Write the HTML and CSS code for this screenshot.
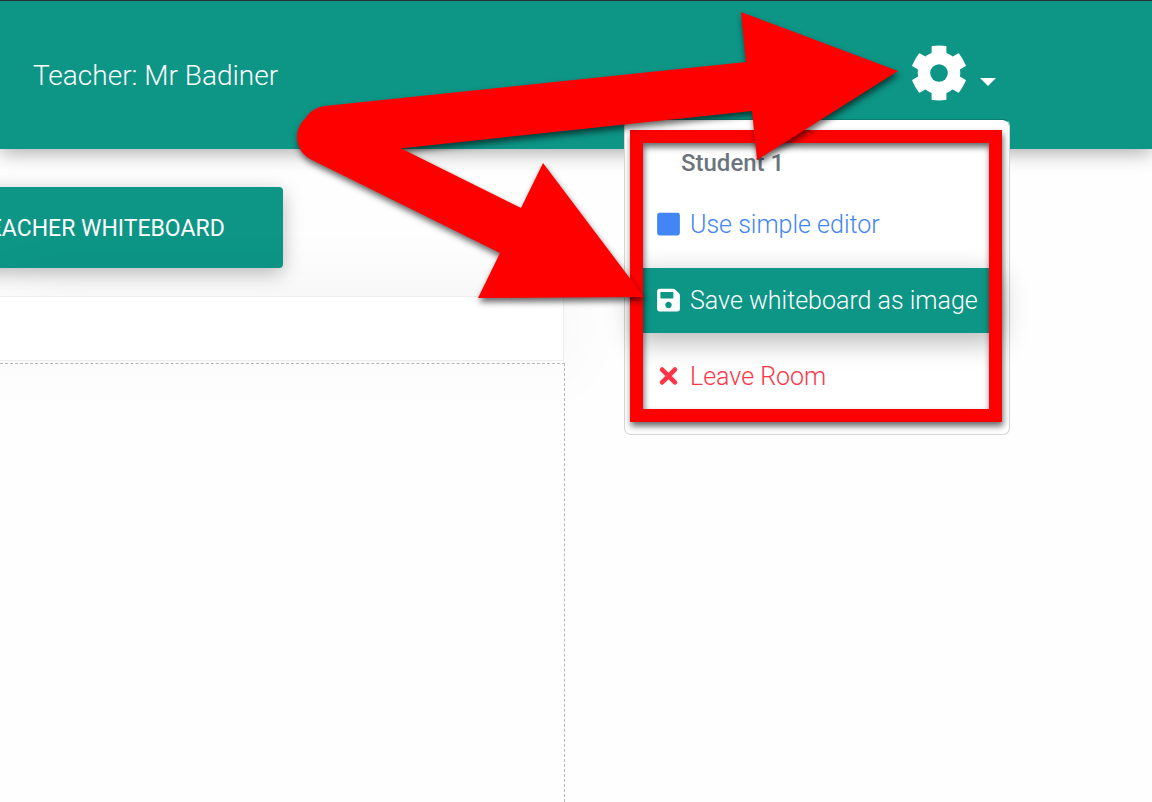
FILE: index.html
```html
<!DOCTYPE html>
<html lang="en">
<head>
    <meta charset="UTF-8">
    <meta name="viewport" content="width=device-width, initial-scale=1.0">
    <title>Whiteboard</title>
    <link rel="stylesheet" href="styles.css">
</head>
<body>
    <header class="navbar">
        <span class="teacher-name">Teacher: Mr Badiner</span>

        <div class="settings">
            <button class="settings-button" type="button" aria-label="Settings">
                <svg class="gear" viewBox="-28 -28 56 56" aria-hidden="true">
                    <defs>
                        <path id="tooth" d="M-7.4 -18V-26.2Q-7.4 -27 -6.6 -27.1Q0 -27.9 6.6 -27.1Q7.4 -27 7.4 -26.2V-18z"/>
                        <mask id="hole">
                            <rect x="-28" y="-28" width="56" height="56" fill="#fff"/>
                            <circle r="8.8" fill="#000"/>
                        </mask>
                    </defs>
                    <g fill="#fff" mask="url(#hole)">
                        <circle r="21.3"/>
                        <use href="#tooth"/>
                        <use href="#tooth" transform="rotate(60)"/>
                        <use href="#tooth" transform="rotate(120)"/>
                        <use href="#tooth" transform="rotate(180)"/>
                        <use href="#tooth" transform="rotate(240)"/>
                        <use href="#tooth" transform="rotate(300)"/>
                    </g>
                </svg>
                <span class="caret"></span>
            </button>

            <div class="menu">
                <h6 class="menu-header">Student 1</h6>
                <a href="#" class="menu-item simple">
                    <svg class="icon" viewBox="0 0 448 512" aria-hidden="true"><rect y="32" width="448" height="448" rx="48"/></svg>
                    Use simple editor
                </a>
                <a href="#" class="menu-item save">
                    <svg class="icon" viewBox="0 0 448 512" aria-hidden="true"><path d="M433.941 129.941l-83.882-83.882A48 48 0 0 0 316.118 32H48C21.49 32 0 53.49 0 80v352c0 26.51 21.49 48 48 48h352c26.51 0 48-21.49 48-48V163.882a48 48 0 0 0-14.059-33.941zM224 416c-35.346 0-64-28.654-64-64 0-35.346 28.654-64 64-64s64 28.654 64 64c0 35.346-28.654 64-64 64zm96-304.52V212c0 6.627-5.373 12-12 12H76c-6.627 0-12-5.373-12-12V108c0-6.627 5.373-12 12-12h228.52c3.183 0 6.235 1.264 8.485 3.515l3.48 3.48A11.996 11.996 0 0 1 320 111.48z"/></svg>
                    Save whiteboard as image
                </a>
                <a href="#" class="menu-item leave">
                    <svg class="icon" viewBox="0 0 448 512" aria-hidden="true"><path d="M98 130L350 382M350 130L98 382" stroke="currentColor" stroke-width="92" stroke-linecap="round"/></svg>
                    Leave Room
                </a>
                <div class="highlight-frame"></div>
            </div>

            <svg class="arrows" viewBox="290 0 720 310" aria-hidden="true">
                <path d="M324.500 106.100L746 62L741 12L898 71L757 160L752 111L329.500 155.900A25 25 0 0 1 324.500 106.100z"/>
                <path d="M333 114.600L521 208L543 163L644 297L478 298L500 253L311 159.500A25 25 0 0 1 333 114.600z"/>
            </svg>
        </div>
    </header>

    <main class="board">
        <div class="tabs">
            <button class="tab-button" type="button">TEACHER WHITEBOARD</button>
        </div>
        <div class="toolbar"></div>
        <div class="canvas"></div>
    </main>
</body>
</html>
```
FILE: styles.css
```css
* {
    box-sizing: border-box;
}
body {
    margin: 0;
    min-height: 100vh;
    display: flex;
    flex-direction: column;
    background: #fefefe;
    font-family: Roboto, sans-serif;
    overflow-x: hidden;
}

/* top bar */
.navbar {
    position: relative;
    z-index: 2;
    display: flex;
    justify-content: space-between;
    align-items: center;
    min-height: 149px;
    padding: 0 142px 0 33px;
    border-top: 1px solid #2b2f33;
    background: #0d9586;
    box-shadow: 0 4px 18px rgba(0, 0, 0, 0.32);
}
.teacher-name {
    color: #fff;
    font-size: 28px;
    font-weight: 300;
}
.settings {
    position: relative;
    align-self: stretch;
    display: flex;
    align-items: center;
}
.settings-button {
    display: flex;
    align-items: center;
    gap: 13px;
    padding: 0 14px 4px 0;
    border: none;
    background: none;
    cursor: pointer;
}
.gear {
    width: 56px;
    height: 56px;
}
.caret {
    margin-top: 17px;
    border: 8px solid transparent;
    border-top-color: #fff;
    border-bottom: none;
}

/* dropdown */
.menu {
    position: absolute;
    top: 118px;
    right: 0;
    width: 386px;
    padding: 15px 10px 25px;
    border: 1px solid #d5d5d5;
    border-top-color: #0b7e70;
    border-radius: 7px;
    background: #fff;
    background-clip: padding-box;
}
.menu-header {
    margin: 0;
    padding-left: 46px;
    color: #6c757d;
    font-size: 24px;
    font-weight: 500;
    line-height: 57px;
}
.menu-item {
    display: flex;
    align-items: center;
    gap: 10px;
    height: 65px;
    margin-bottom: 11px;
    padding-left: 22px;
    font-size: 25px;
    font-weight: 300;
    white-space: nowrap;
    text-decoration: none;
}
.menu-item.simple {
    color: #4285f4;
}
.menu-item.save {
    background: #0d9586;
    color: #fff;
    box-shadow: 0 8px 28px rgba(0, 0, 0, 0.3);
}
.menu-item.leave {
    margin-bottom: 0;
    color: #ff3547;
}
.icon {
    width: 23px;
    height: 26px;
    margin-bottom: 2px;
    fill: currentColor;
}
.highlight-frame {
    position: absolute;
    top: 10px;
    right: 7px;
    bottom: 12px;
    left: 5px;
    border: 13px solid #f00;
    filter: drop-shadow(1px 4px 3px rgba(0, 0, 0, 0.6));
    pointer-events: none;
}
.arrows {
    position: absolute;
    top: -1px;
    right: 0;
    width: 720px;
    height: 310px;
    fill: #f00;
    filter: drop-shadow(1px 4px 3px rgba(0, 0, 0, 0.6));
    pointer-events: none;
}

/* whiteboard */
.board {
    flex: 1;
    display: flex;
    flex-direction: column;
    width: calc(50% - 11px);
    padding-top: 38px;
}
.tabs {
    display: flex;
    margin-bottom: 28px;
}
.tab-button {
    height: 81px;
    margin-left: -83px;
    padding: 2px 58px 0;
    border: none;
    border-radius: 4px;
    background: #0d9586;
    color: #fff;
    font-family: inherit;
    font-size: 23px;
    white-space: nowrap;
    box-shadow: 0 5px 20px rgba(0, 0, 0, 0.28);
    cursor: pointer;
}
.toolbar {
    height: 65px;
    margin-right: 1px;
    margin-bottom: 2px;
    border: 1px solid #eee;
    border-left: none;
    background: #fff;
    box-shadow: 0 0 80px rgba(0, 0, 0, 0.06);
}
.canvas {
    flex: 1;
    min-height: 439px;
    border-top: 1px dashed #b8b8b8;
    border-right: 1px dashed #b8b8b8;
    background: linear-gradient(#fbfbfb, #fefefe 40px);
}
```
